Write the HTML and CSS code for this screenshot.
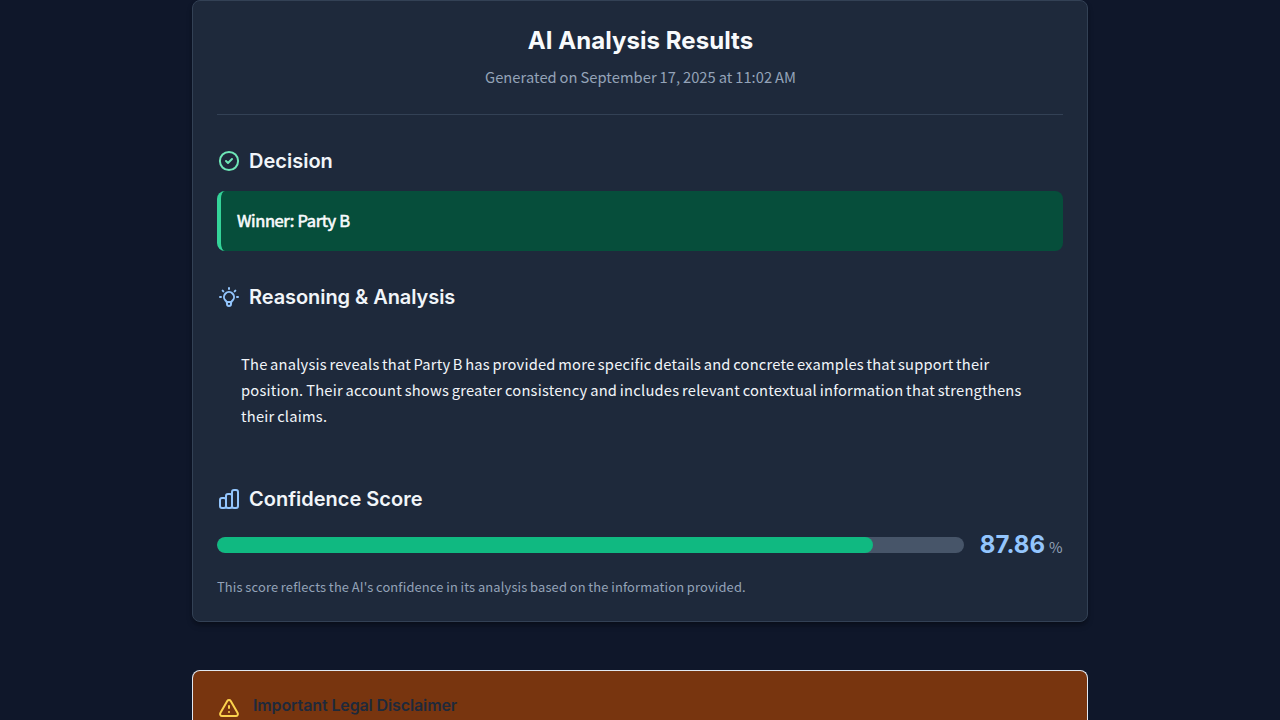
FILE: index.html
```html
<!DOCTYPE html>
<html lang="en">
<head>
<meta charset="utf-8">
<title>AI Analysis Results</title>
<link rel="stylesheet" href="styles.css">
</head>
<body>
<main class="page">
  <section class="card">
    <header class="card-header">
      <h1>AI Analysis Results</h1>
      <p>Generated on September 17, 2025 at 11:02 AM</p>
    </header>
    <section class="decision">
      <h2><svg class="icon green" viewBox="0 0 24 24"><circle cx="12" cy="12" r="9.1"/><path d="M9 12l2 2 4-4"/></svg>Decision</h2>
      <div class="winner">Winner: Party B</div>
    </section>
    <section class="reasoning">
      <h2><svg class="icon" viewBox="0 0 24 24"><path d="M9.66 17h4.68M12 3v1M18.36 5.64l-.7.7M21 12h-1M4 12H3M6.34 6.34l-.7-.7M8.46 15.54a5 5 0 1 1 7.08 0l-.55.54A3.4 3.4 0 0 0 14 18.47V19a2 2 0 1 1-4 0v-.53a3.4 3.4 0 0 0-.99-2.39z"/></svg>Reasoning &amp; Analysis</h2>
      <p class="analysis"><span class="lead">The analysis reveals that Party B has provided more specific details and concrete examples that support their</span> position. Their account shows greater consistency and includes relevant contextual information that strengthens their claims.</p>
    </section>
    <section class="confidence">
      <h2><svg class="icon" viewBox="0 0 24 24"><path d="M9 19v-6a2 2 0 0 0-2-2H5a2 2 0 0 0-2 2v6a2 2 0 0 0 2 2h2a2 2 0 0 0 2-2zm0 0V9a2 2 0 0 1 2-2h2a2 2 0 0 1 2 2v10m-6 0a2 2 0 0 0 2 2h2a2 2 0 0 0 2-2m0 0V5a2 2 0 0 1 2-2h2a2 2 0 0 1 2 2v14a2 2 0 0 1-2 2h-2a2 2 0 0 1-2-2z"/></svg>Confidence Score</h2>
      <div class="score">
        <div class="track"><div class="fill" style="width:87.86%"></div></div>
        <div class="value"><strong>87.86</strong><span>%</span></div>
      </div>
      <p class="note">This score reflects the AI's confidence in its analysis based on the information provided.</p>
    </section>
  </section>
  <section class="disclaimer">
    <svg class="icon yellow" viewBox="0 0 24 24"><path d="M12 9v2m0 4h.01M5.07 19h13.86c1.54 0 2.5-1.67 1.73-3L13.73 4c-.77-1.33-2.69-1.33-3.46 0L3.34 16c-.77 1.33.19 3 1.73 3z"/></svg>
    <h3>Important Legal Disclaimer</h3>
  </section>
</main>
</body>
</html>
```
FILE: styles.css
```css
* { box-sizing: border-box; margin: 0; padding: 0; }
html { background: #0f172a; }
body {
  height: 720px;
  overflow: hidden;
  color: #f1f5f9;
  font: 14.7px/26px "Noto Sans CJK SC", sans-serif;
}
.page { width: 896px; margin: 0 auto; }
h1, h2, h3, strong { font-family: Inter, sans-serif; }
.card {
  height: 622px;
  padding: 24px;
  border: 1px solid #334155;
  border-radius: 8px;
  background: #1e293b;
  box-shadow: 0 4px 6px -1px rgba(0, 0, 0, .3), 0 2px 4px -2px rgba(0, 0, 0, .3);
}
.card-header {
  height: 90px;
  border-bottom: 1px solid #334155;
  text-align: center;
}
h1 { padding-left: 1px; color: #f8fafc; font-size: 24px; line-height: 32px; font-weight: 700; letter-spacing: .05px; }
.card-header p { margin-top: 7px; padding-left: 1px; color: #94a3b8; letter-spacing: .06px; word-spacing: -.5px; }
h2 {
  display: flex;
  align-items: center;
  gap: 8px;
  font-size: 20px;
  line-height: 28px;
  font-weight: 600;
}
.reasoning h2 { letter-spacing: -.07px; }
.icon {
  flex: none;
  width: 24px;
  height: 24px;
  fill: none;
  stroke: #93c5fd;
  stroke-width: 2;
  stroke-linecap: round;
  stroke-linejoin: round;
}
.icon.green { stroke: #6ee7b7; }
.icon.yellow { stroke: #fcd34d; }
.decision { padding-top: 32px; }
.winner {
  height: 60px;
  margin-top: 16px;
  padding: 16px;
  border-left: 4px solid #34d399;
  border-radius: 8px;
  background: #064e3b;
  font-size: 16.5px;
  line-height: 27px;
  -webkit-text-stroke: .6px #f8fafc;
  color: #f8fafc;
  letter-spacing: -.4px;
  word-spacing: .3px;
}
.reasoning { padding-top: 32px; }
.analysis { margin-top: 16px; padding: 24px 22px 24px 24px; letter-spacing: .22px; word-spacing: -.8px; }
.lead { letter-spacing: .22px; word-spacing: -1px; }
.confidence { padding-top: 32px; }
.score { display: flex; align-items: center; gap: 16px; height: 32px; margin-top: 16px; }
.track { flex: 1; height: 16px; border-radius: 8px; background: #475569; overflow: hidden; }
.fill { height: 100%; border-radius: 8px; background: #10b981; }
.value { display: flex; align-items: baseline; gap: 4px; padding-right: .5px; color: #94a3b8; }
.value strong { color: #93c5fd; font-size: 24px; line-height: 32px; }
.value span { font-size: 14.7px; }
.note { margin-top: 15px; color: #94a3b8; font-size: 12.9px; line-height: 21px; letter-spacing: .15px; word-spacing: -.4px; }
.disclaimer {
  display: flex;
  gap: 12px;
  height: 50px;
  margin-top: 48px;
  padding: 24px 24px 0;
  border: 1px solid #e2e8f0;
  border-bottom: 0;
  border-radius: 8px 8px 0 0;
  background: #78350f;
}
.disclaimer .icon { margin-top: 2px; }
h3 { color: #1e293b; font-size: 16px; line-height: 20px; font-weight: 600; letter-spacing: -.12px; }
```
